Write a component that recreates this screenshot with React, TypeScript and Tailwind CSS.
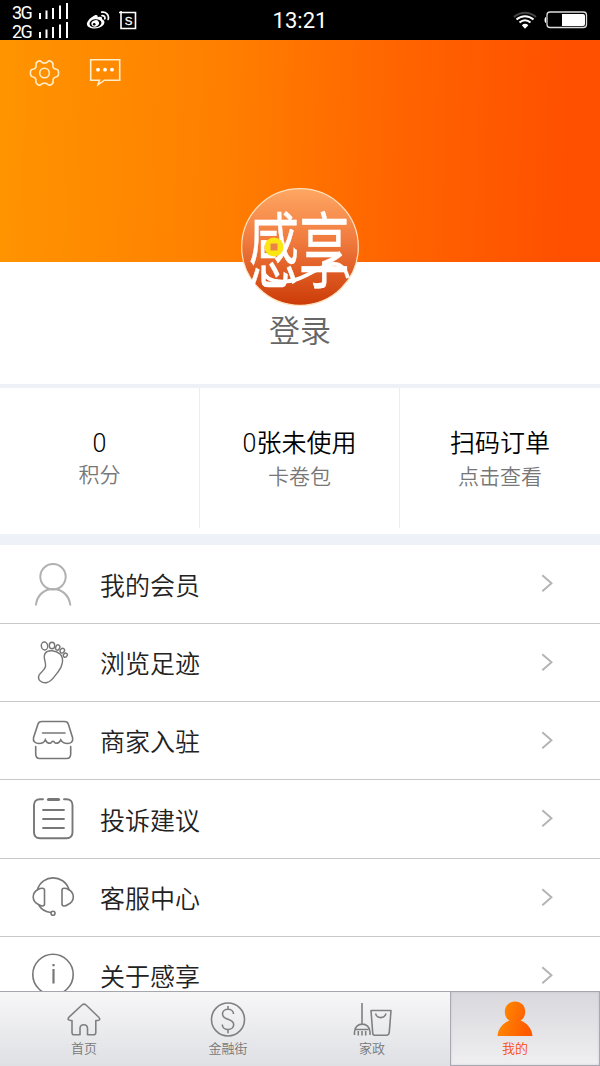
import type { ReactNode } from "react";

function Signal() {
  return (
    <svg width="30" height="16" viewBox="0 0 30 16" fill="#fff">
      <rect x="0" y="10" width="2" height="6" />
      <rect x="6.5" y="7.5" width="2" height="8.5" />
      <rect x="13" y="5" width="2" height="11" />
      <rect x="20" y="2.5" width="2" height="13.5" />
      <rect x="27" y="0" width="2" height="16" />
    </svg>
  );
}

function StatusBar() {
  return (
    <div className="grid h-10 shrink-0 grid-cols-3 bg-black text-white">
      <div className="flex pl-3">
        <div className="flex w-[27px] flex-col pt-[3px] text-[18px] leading-[19px] tracking-[-1.6px]">
          <span>3G</span>
          <span>2G</span>
        </div>
        <div className="flex flex-col gap-[3px] pt-[3px]">
          <Signal />
          <Signal />
        </div>
        <svg className="mt-[10px] ml-[17px]" width="24" height="20" viewBox="86 10 24 20" fill="none">
          <path
            d="M94.500 15.400C96.500 14.400 98.100 15 97.600 17.200C100.500 16.200 102.700 16.700 101.900 19.300C104.500 20 105.200 22.300 103.600 24.700C100.500 29.300 88.700 30 87 24.700C86.200 21.600 91 17 94.500 15.400Z"
            fill="#fff"
          />
          <ellipse cx="95.500" cy="23.300" rx="6" ry="4" transform="rotate(-8 95.500 23.300)" fill="#000" />
          <ellipse cx="95.200" cy="23.400" rx="3.900" ry="3.200" transform="rotate(-20 95.200 23.400)" fill="#fff" />
          <circle cx="94.200" cy="24.200" r="1.300" fill="#000" />
          <path d="M102 15.600c2-.3 3.400 1.200 2.800 3.200M101.700 12.200c4.300-.8 7.700 2.700 6.500 7.200" stroke="#fff" strokeWidth="1.700" strokeLinecap="round" />
        </svg>
        <svg className="mt-[10px] ml-[9px]" width="18" height="20" viewBox="119 10 18 20" fill="none">
          <path d="M119 12.500h16.500v16h-14.500V11" stroke="#fff" strokeWidth="1.600" />
          <text x="128.500" y="25" fontSize="11.500" textAnchor="middle" fill="#fff" stroke="#fff" strokeWidth=".3" fontFamily="Liberation Sans, sans-serif">S</text>
        </svg>
      </div>
      <div className="pt-[5px] text-center text-[22px] leading-8">13:21</div>
      <div className="flex justify-end pt-[9px] pr-[12px]">
        <svg width="76" height="22" viewBox="512 9 76 22" fill="none">
          <path d="M514 17c6.500-5.700 15.500-5.700 22 0" stroke="#444" strokeWidth="2" />
          <path d="M516.500 19.600c5-4.600 12-4.600 17 0M519.500 22.600c3.300-3 7.700-3 11 0" stroke="#fff" strokeWidth="2" />
          <path d="M521.800 25.200c2-1.800 4.600-1.800 6.600 0L525 28.800Z" fill="#fff" />
          <rect x="547" y="12" width="39.500" height="15.500" rx="3" stroke="#ddd" strokeWidth="1.300" />
          <path d="M546 17v6c-2 0-2-6 0-6Z" fill="#fff" />
          <path d="M562 14h21a2 2 0 0 1 2 2v8a2 2 0 0 1-2 2h-21Z" fill="#fff" />
        </svg>
      </div>
    </div>
  );
}

function Avatar() {
  return (
    <svg width="118" height="118" viewBox="241 188 118 118" fill="none">
      <defs>
        <linearGradient id="disc" x1="0" y1="0" x2="0" y2="1">
          <stop offset="0" stopColor="#ffa763" />
          <stop offset=".45" stopColor="#f07a3d" />
          <stop offset="1" stopColor="#cc3b08" />
        </linearGradient>
      </defs>
      <circle cx="300" cy="247" r="58.300" fill="url(#disc)" stroke="#ffe0bd" strokeWidth="1.200" />
      <text
        transform="translate(248.500 280.500) scale(1 1.620)"
        fontSize="50.500"
        fontWeight="400"
        fill="#fff"
        stroke="#fff"
        strokeWidth=".4"
        fontFamily="Noto Sans CJK SC, sans-serif"
      >
        感享
      </text>
      <path d="M263 271c2 7 8 10 17 10.500c22 2 36-15.500 53-17.500c8-1 13 6 15 14" stroke="#fff" strokeWidth="3.800" />
      <circle cx="274" cy="247" r="9.500" fill="#fbe613" />
      <rect x="270.500" y="243.500" width="7" height="7" fill="#ec8346" />
    </svg>
  );
}

function Profile() {
  return (
    <section className="flex h-[344px] shrink-0 flex-col items-center">
      <div className="flex h-[222px] w-full items-start bg-[linear-gradient(92deg,#ff9400_0%,#ff8000_36%,#ff6400_66%,#ff5000_94%)]">
        <svg className="mt-[18px] ml-[29px]" width="31" height="30" viewBox="29 58 31 30" fill="none" stroke="#ffedc9" strokeWidth="1.600" strokeLinejoin="round">
          <path d="M41.300 61.800C42.500 63.500 46.500 63.500 47.700 61.800C48.500 60.500 49.500 60.600 50.800 61.300C52.700 62.300 53.300 63 52.900 64.800C52.600 67.200 54.200 69 56.500 69.300C58.500 69.500 58.600 71 58.600 73C58.600 75 58.300 76.400 56.500 76.800C54 77.200 52.600 79 53.100 81.300C53.500 83 52.900 83.600 51 84.700C49.500 85.500 48.700 85.500 47.700 84.300C46.500 82.700 42.500 82.700 41.300 84.300C40.300 85.500 39.500 85.500 38 84.700C36.100 83.600 35.500 83 35.900 81.300C36.400 79 35 77.200 32.500 76.800C30.700 76.400 30.400 75 30.400 73C30.400 71 30.500 69.500 32.500 69.300C34.800 69 36.400 67.200 36.100 64.800C35.700 63 36.300 62.300 38.200 61.300C39.500 60.600 40.500 60.500 41.300 61.800Z" />
          <circle cx="44.500" cy="73" r="4.800" />
        </svg>
        <svg className="mt-[17px] ml-[29px]" width="33" height="32" viewBox="89 57 33 32" fill="none" stroke="#ffedc9" strokeWidth="1.600">
          <path d="M90.700 59.700h29v20.500h-15.200l-6.500 4.600 1.500-4.600h-8.800Z" />
          <g fill="#fff" stroke="none">
            <circle cx="98" cy="69.700" r="1.900" />
            <circle cx="105" cy="69.700" r="1.900" />
            <circle cx="112" cy="69.700" r="1.900" />
          </g>
        </svg>
      </div>
      <div className="relative -mt-[74px]">
        <Avatar />
      </div>
      <div className="mt-[6px] text-[31px] leading-10 font-[350] text-[#666]">登录</div>
    </section>
  );
}

const stats = [
  { value: "0", label: "积分" },
  { value: "0张未使用", label: "卡卷包" },
  { value: "扫码订单", label: "点击查看" },
];

function Stats() {
  return (
    <section className="h-[161px] shrink-0 border-t-4 border-b-[11px] border-[#eef1f7] bg-white">
      <div className="grid h-[140px] grid-cols-3 divide-x divide-[#ededf0]">
        {stats.map((s, i) => (
          <div key={s.label} className="flex flex-col items-center pt-[40px]">
            <span className="text-[25px] leading-8 font-[350] text-black">{s.value}</span>
            <span className={`text-[21px] leading-8 font-[350] text-[#777] ${i === 0 ? "-mt-px" : "mt-px"}`}>{s.label}</span>
          </div>
        ))}
      </div>
    </section>
  );
}

const rows: { label: string; height: string; icon: ReactNode }[] = [
  {
    label: "我的会员",
    height: "h-[79px]",
    icon: (
      <g stroke="#b1b1b1" strokeWidth="2">
        <circle cx="23" cy="15.700" r="12.700" />
        <path d="M5.800 44.500C8 22.500 38 22.500 40.400 44.500" />
      </g>
    ),
  },
  {
    label: "浏览足迹",
    height: "h-[78px]",
    icon: (
      <g stroke="#777" strokeWidth="1.400">
        <path d="M15 14.500C18 10 26 11.500 30 15C34.500 19.500 32.500 27.500 28 33C24.500 37 22 42.500 17 43.500C12 44.500 7.500 41.500 8.700 37C9.500 33.500 14.500 32 15.500 27.500C16.500 23 12.500 19 15 14.500Z" />
        <ellipse cx="14.500" cy="7" rx="3.200" ry="4" transform="rotate(-8 14.500 7)" />
        <ellipse cx="22" cy="6.500" rx="2.700" ry="3.200" />
        <ellipse cx="27.700" cy="8.500" rx="2" ry="2.700" transform="rotate(25 27.700 8.500)" />
        <ellipse cx="32.300" cy="11.700" rx="2" ry="2.500" transform="rotate(40 32.300 11.700)" />
        <ellipse cx="35.300" cy="16.200" rx="1.800" ry="2.200" transform="rotate(40 35.300 16.200)" />
      </g>
    ),
  },
  {
    label: "商家入驻",
    height: "h-[78px]",
    icon: (
      <g stroke="#777" strokeWidth="1.600" strokeLinecap="round">
        <path d="M8 7C8.600 4.800 9.800 4.500 12 4.500H34.500c2.200 0 3.300.5 3.800 2.500L42.600 20.800C43.400 25 40.500 26.500 37.500 26.500C33.500 26.500 32 25 30.800 22.800C29.800 25 28 26.300 25.800 26.300C24.800 26.300 24.200 24.200 23 24.200C21.800 24.200 21.200 26.300 20.200 26.300C18 26.300 16.300 25 15.300 22.800C14.300 25.500 12 26.500 9 26.500C5.500 26.500 2.700 24.500 3.500 20.800Z" />
        <path d="M12.500 16h22.500M5.700 29.500v7.500c0 3 1.300 4.500 4 4.500h27c2.700 0 4-1.500 4-4.500v-7.500" />
      </g>
    ),
  },
  {
    label: "投诉建议",
    height: "h-[79px]",
    icon: (
      <g stroke="#777" strokeWidth="1.900" strokeLinecap="round">
        <path d="M13 3.300H10c-4 0-6 2-6 6v27c0 4 2 6 6 6h26.500c4 0 6-2 6-6v-27c0-4-2-6-6-6h-2.500" />
        <path d="M18.500 3.500h10" strokeWidth="3.200" />
        <path d="M13 14h21M13 23h21M13 32h21" strokeWidth="1.800" />
      </g>
    ),
  },
  {
    label: "客服中心",
    height: "h-[78px]",
    icon: (
      <g stroke="#777" strokeWidth="1.600" strokeLinecap="round">
        <path d="M7.500 15.500C12 0 34 0 39 15.500" />
        <path d="M14.500 16v14c0 2.500-3 2.500-6 .5C1.500 27 1.500 19 8 15.500c3-1.800 6.500-1.800 6.500.5ZM32 16v14c0 2.500 3 2.500 6 .5c7-3.500 7-11.500.5-15c-3-1.800-6.500-1.800-6.500.5Z" />
        <path d="M9 31.500c2.500 4 7 6.500 12 7" />
        <circle cx="23" cy="39.200" r="2" />
      </g>
    ),
  },
  {
    label: "关于感享",
    height: "h-[78px]",
    icon: (
      <g stroke="#777" strokeWidth="1.600">
        <circle cx="23" cy="22.500" r="20.200" />
        <path d="M23.500 12v2.200M23.500 17v14.500" strokeWidth="2.200" />
      </g>
    ),
  },
];

function Menu() {
  return (
    <ul className="min-h-0 flex-1 overflow-hidden">
      {rows.map((r) => (
        <li key={r.label} className={`flex items-center border-b border-[#c8c8c8] pl-[30px] ${r.height}`}>
          <svg className="mt-[3px]" width="46" height="50" viewBox="0 0 46 50" fill="none">
            {r.icon}
          </svg>
          <span className="mt-[5px] ml-[24px] flex-1 text-[25px] leading-8 font-[350] text-[#222]">{r.label}</span>
          <svg className="mr-[46px]" width="14" height="20" viewBox="0 0 14 20" fill="none" stroke="#b3b3b3" strokeWidth="1.900">
            <path d="M2.300 1.200L11.500 9.200L2.300 17.300" />
          </svg>
        </li>
      ))}
    </ul>
  );
}

const tabs = [
  {
    label: "首页",
    icon: (
      <path d="M17 4.500L4.500 16.200C2 18.500 3 20 6 20H7v12c0 1.700.7 2.300 2 2.300h6V28c0-5 7.500-5 7.500 0v6.300h6c1.700 0 2.300-.7 2.300-2.300V20h1.200c3 0 3.500-1.500 1.500-3.500L21 4.500c-1.500-1.300-2.500-1.300-4 0Z" />
    ),
  },
  {
    label: "金融街",
    icon: (
      <>
        <circle cx="19" cy="19" r="16.500" />
        <path d="M19 5.500v4M19 28.800v4M24.500 13.500c0-3-2.500-4.700-5.500-4.700s-5.500 1.700-5.500 4.700c0 3.200 2.500 4.300 5.500 5.300s5.700 2 5.700 5.200-2.700 5-5.700 5-5.700-2-5.700-5" />
      </>
    ),
  },
  {
    label: "家政",
    icon: (
      <path d="M9 2.500v21M1.500 34.500v-3C1.500 21 17 21 17 31.500v3M2.500 29h13M5.300 30.500v4.500M9 30.500v4.500M12.700 30.500v4.500M18 10h20l-1.700 21.500c-.2 2.500-1 3.300-3 3.300H21.500c-1 0-1.700-.8-1.800-2.500ZM22.500 13c1.300 5.500 9.200 5.500 10.500 0" />
    ),
  },
];

function TabBar() {
  return (
    <nav className="flex h-[75px] shrink-0 border-t border-[#a6a7ac] bg-linear-to-b from-[#f7f7f8] to-[#dfe0e4] pl-3">
      {tabs.map((t) => (
        <div key={t.label} className="flex w-36 flex-col items-center pt-[8px]">
          <svg width="40" height="39" viewBox="-1 -.5 40 39" fill="none" stroke="#808080" strokeWidth="1.600" strokeLinejoin="round">
            {t.icon}
          </svg>
          <span className="text-[13px] leading-5 font-[350] text-[#777]">{t.label}</span>
        </div>
      ))}
      <div className="ml-[6px] flex w-[150px] flex-col items-center border-x border-b border-[#a9aab1] bg-linear-to-b from-[#d8d8dd] to-[#efeff1] pt-[8px] pr-5 shadow-[inset_0_0_2px_rgba(120,120,140,0.3)]">
        <svg width="40" height="39" viewBox="0 0 40 39">
          <defs>
            <linearGradient id="person" x1="0" y1="0" x2="1" y2=".3">
              <stop offset="0" stopColor="#ff9300" />
              <stop offset="1" stopColor="#ff5a00" />
            </linearGradient>
          </defs>
          <path d="M20 1.500c6 0 10.200 4.300 10.200 10c0 4-1.700 7.500-4.700 9c6.500 2.500 11.500 8 12 15.500h-35c.5-7.500 5.500-13 12-15.500c-3-1.500-4.700-5-4.700-9c0-5.700 4.200-10 10.200-10Z" fill="url(#person)" />
        </svg>
        <span className="text-[13px] leading-5 font-[350] text-[#fb4a08]">我的</span>
      </div>
    </nav>
  );
}

export default function App() {
  return (
    <main className="flex h-[1066px] w-[600px] flex-col overflow-hidden bg-white font-['Roboto','Noto_Sans_CJK_SC',sans-serif]">
      <StatusBar />
      <Profile />
      <Stats />
      <Menu />
      <TabBar />
    </main>
  );
}
